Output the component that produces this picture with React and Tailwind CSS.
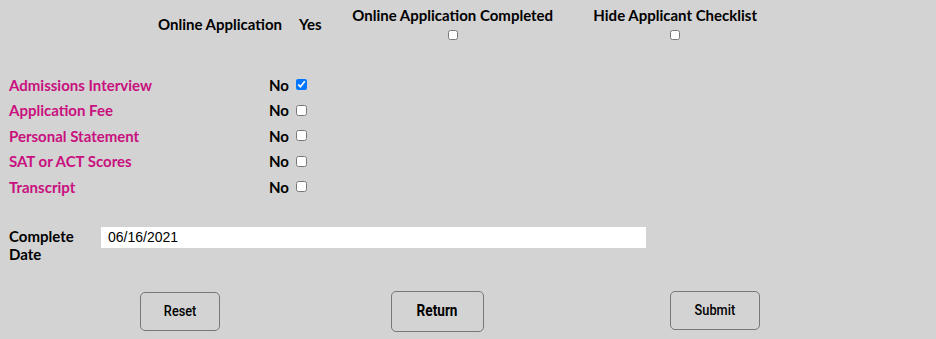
import { useState } from 'react';

const items = [
  { name: 'Admissions Interview', checked: true },
  { name: 'Application Fee', checked: false },
  { name: 'Personal Statement', checked: false },
  { name: 'SAT or ACT Scores', checked: false },
  { name: 'Transcript', checked: false },
];

export default function App() {
  const [checks, setChecks] = useState(items.map(i => i.checked));
  const [date, setDate] = useState('06/16/2021');

  return (
    <div className="w-[936px] h-[339px] bg-[#d3d3d3] font-['Lato',sans-serif] text-[15px] font-bold text-black">
      {/* Header */}
      <div className="flex items-start pt-[4px] h-[72px]">
        <div className="ml-[158px] mt-[9px]">Online Application</div>
        <div className="ml-[17px] mt-[9px]">Yes</div>
        <div className="ml-[28px] flex flex-col items-center w-[206px]">
          <span>Online Application Completed</span>
          <input type="checkbox" className="m-0 mt-[3px] w-[10px] h-[10px]" />
        </div>
        <div className="ml-[36px] flex flex-col items-center w-[167px]">
          <span>Hide Applicant Checklist</span>
          <input type="checkbox" className="m-0 mt-[3px] w-[10px] h-[10px]" />
        </div>
      </div>

      {/* Checklist rows */}
      <div className="pl-[9px]">
        {items.map((item, i) => (
          <div key={item.name} className="flex items-center h-[25.5px]">
            <span className="w-[260px] text-[#c8107e]">{item.name}</span>
            <span className="w-[27px]">No</span>
            <input
              type="checkbox"
              checked={checks[i]}
              onChange={() => setChecks(checks.map((c, j) => (j === i ? !c : c)))}
              className="m-0 w-[11px] h-[11px]"
            />
          </div>
        ))}
      </div>

      {/* Complete date */}
      <div className="flex items-start pl-[9px] mt-[27px]">
        <div className="w-[92px] leading-[18px]">
          Complete
          <br />
          Date
        </div>
        <input
          value={date}
          onChange={e => setDate(e.target.value)}
          className="w-[545px] h-[21px] bg-white px-[7px] font-['Liberation_Sans',sans-serif] text-[14px] font-normal outline-none"
        />
      </div>

      {/* Buttons */}
      <div className="flex items-start mt-[28px] font-['Roboto',sans-serif]">
        <button className="ml-[140px] mt-[1px] w-[80px] h-[39px] rounded-[5px] border border-[#777] text-[15px] font-medium">
          <span className="inline-block scale-x-85">Reset</span>
        </button>
        <button className="ml-[171px] w-[93px] h-[41px] rounded-[5px] border border-[#777] text-[16px] font-bold">
          <span className="inline-block scale-x-85">Return</span>
        </button>
        <button className="ml-[186px] w-[90px] h-[39px] rounded-[5px] border border-[#777] text-[15px] font-medium">
          <span className="inline-block scale-x-85">Submit</span>
        </button>
      </div>
    </div>
  );
}
